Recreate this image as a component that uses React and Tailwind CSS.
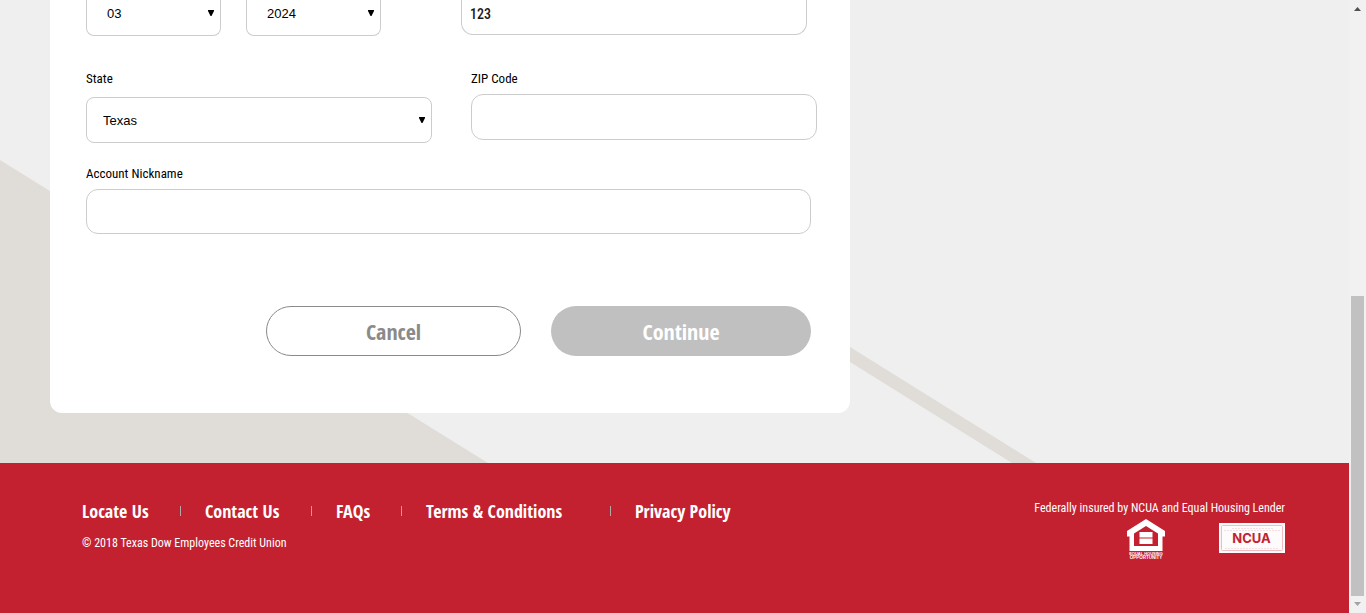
const fieldBorder = "border border-[#cccccc] bg-white outline-none";
const labelText = "block text-[13px] leading-[18px] text-black";

function Select({ id, label, value, className, textClass }) {
  return (
    <select
      id={id}
      aria-label={label}
      defaultValue={value}
      className={`block appearance-none font-['Liberation_Sans',sans-serif] text-[13px] text-black ${fieldBorder} ${className} ${textClass}`}
    >
      <option>{value}</option>
    </select>
  );
}

function Arrow({ className }) {
  return (
    <svg aria-hidden="true" viewBox="0 0 6 6" className={`pointer-events-none absolute right-[7px] size-[6px] ${className}`}>
      <path d="M0 0h6v1L3.500 6h-1L0 1z" fill="#000" />
    </svg>
  );
}

function HousingLogo() {
  return (
    <svg role="img" aria-label="Equal Housing Opportunity" viewBox="0 0 38 40" className="h-[40px] w-[38px]">
      <path
        fillRule="evenodd"
        fill="#fff"
        d="M19 0 38 12v5.500h-2.500V32h-33V17.500H0V12zM19 7 7 14.500V27h24V14.500z"
      />
      <path d="M12.500 13h13v5.500h-13zM12.500 19.500h13V25h-13z" fill="#fff" />
      <g fill="#fff" textAnchor="middle" fontSize="4" fontWeight="700" fontFamily="Liberation Sans, sans-serif">
        <text x="19" y="36">EQUAL HOUSING</text>
        <text x="19" y="39.500" fontSize="4.500">OPPORTUNITY</text>
      </g>
    </svg>
  );
}

function NcuaLogo() {
  return (
    <svg role="img" aria-label="NCUA" viewBox="0 0 66 30" className="h-[30px] w-[66px]">
      <path d="M0 0h66v30H0z" fill="#fdfbfb" />
      <rect x="2.500" y="2.500" width="61" height="25" rx="1" fill="none" stroke="#efbcc2" />
      <path d="M13 5.500h41M5 7.500h56M6 25.500h54" stroke="#f3dfe1" strokeDasharray="2 1" />
      <text x="32.500" y="19.500" textAnchor="middle" fontSize="13" fontWeight="700" fill="#c32130" fontFamily="Inter, sans-serif">NCUA</text>
    </svg>
  );
}

function Scrollbar() {
  return (
    <div aria-hidden="true" className="flex w-[17px] shrink-0 flex-col items-center bg-[#f1f1f1]">
      <svg viewBox="0 0 17 17" className="size-[17px]"><path d="M5 11h7L8.500 7z" fill="#505050" /></svg>
      <div className="flex-1" />
      <div className="h-[300px] w-[13px] bg-[#c1c1c1]" />
      <svg viewBox="0 0 17 17" className="size-[17px]"><path d="M5 6h7L8.500 10z" fill="#a3a3a3" /></svg>
    </div>
  );
}

export default function App() {
  return (
    <div className="flex min-h-screen font-['Roboto_Condensed',sans-serif]">
      <div className="flex min-w-0 flex-1 flex-col">
        <main className="relative overflow-hidden bg-[#efefef] pb-[50px] pl-[50px]">
          <svg aria-hidden="true" className="absolute top-0 left-0 h-[463px] w-[1349px]" viewBox="0 0 1349 463">
            <path d="M0 160 488 463H0zM850 347 1036 463h-24L850 362z" fill="#e0ddd8" />
          </svg>
          <form className="relative w-full max-w-[800px] rounded-b-xl bg-white pr-[33px] pb-[57px] pl-[36px]">
            <div className="flex h-9 items-start">
              <div className="relative">
                <Select id="month" label="Expiration month" value="03" className="h-9 w-[135px] rounded-b-lg" textClass="border-t-0 pb-[8px] pl-5" />
                <Arrow className="top-[10px]" />
              </div>
              <div className="relative ml-[25px]">
                <Select id="year" label="Expiration year" value="2024" className="h-9 w-[135px] rounded-b-lg" textClass="border-t-0 pb-[8px] pl-5" />
                <Arrow className="top-[10px]" />
              </div>
              <input
                aria-label="Security code"
                defaultValue="123"
                className={`ml-20 h-[35px] w-[346px] rounded-b-xl pb-[6px] pl-2 text-[14px] font-medium text-[#1a1a1a] ${fieldBorder} border-t-0`}
              />
            </div>

            <div className="mt-[34px] flex items-start justify-between">
              <div className="w-[346px]">
                <label htmlFor="state" className={labelText}>State</label>
                <div className="relative mt-[9px]">
                  <Select id="state" value="Texas" className="h-[46px] w-full rounded-lg" textClass="pt-[2px] pl-4" />
                  <Arrow className="top-5" />
                </div>
              </div>
              <div className="w-[346px]">
                <label htmlFor="zip" className={labelText}>ZIP Code</label>
                <input id="zip" className={`mt-[6px] block h-[46px] w-full rounded-xl px-2 ${fieldBorder}`} />
              </div>
            </div>

            <div className="mt-[22px] pr-[6px]">
              <label htmlFor="nickname" className={labelText}>Account Nickname</label>
              <input id="nickname" className={`mt-[6px] block h-[45px] w-full rounded-xl px-2 ${fieldBorder}`} />
            </div>

            <div className="mt-[72px] flex justify-end gap-[30px] pr-[6px] font-['Open_Sans_Condensed','Roboto_Condensed',sans-serif] text-[22px] font-bold">
              <button type="button" className="h-[50px] w-[255px] rounded-full border border-[#8a8a8a] bg-white text-[#8a8a8a]">Cancel</button>
              <button type="button" className="h-[50px] w-[260px] rounded-full bg-[#c0c0c0] text-white">Continue</button>
            </div>
          </form>
        </main>

        <footer className="flex flex-1 items-start justify-between bg-[#c32130] pt-[36px] pr-[64px] pl-[82px] text-white">
          <div>
            <nav className="flex items-center font-['Open_Sans_Condensed','Roboto_Condensed',sans-serif] text-[18px] leading-6 font-bold whitespace-nowrap">
              <a href="#locate" className="w-[98px]">Locate Us</a>
              <span className="h-[10px] w-px bg-[#b5a5a5]" />
              <a href="#contact" className="ml-6 w-[106px]">Contact Us</a>
              <span className="h-[10px] w-px bg-[#b5a5a5]" />
              <a href="#faqs" className="ml-6 w-[65px]">FAQs</a>
              <span className="h-[10px] w-px bg-[#b5a5a5]" />
              <a href="#terms" className="ml-6 w-[184px]">Terms &amp; Conditions</a>
              <span className="h-[10px] w-px bg-[#b5a5a5]" />
              <a href="#privacy" className="ml-6">Privacy Policy</a>
            </nav>
            <p className="mt-[11px] text-[12px] leading-[18px]">© 2018 Texas Dow Employees Credit Union</p>
          </div>
          <div className="flex flex-col items-end">
            <p className="text-[12px] leading-[18px] whitespace-nowrap">Federally insured by NCUA and Equal Housing Lender</p>
            <div className="mt-[2px] flex items-start gap-[54px]">
              <HousingLogo />
              <div className="pt-1"><NcuaLogo /></div>
            </div>
          </div>
        </footer>
      </div>
      <Scrollbar />
    </div>
  );
}
